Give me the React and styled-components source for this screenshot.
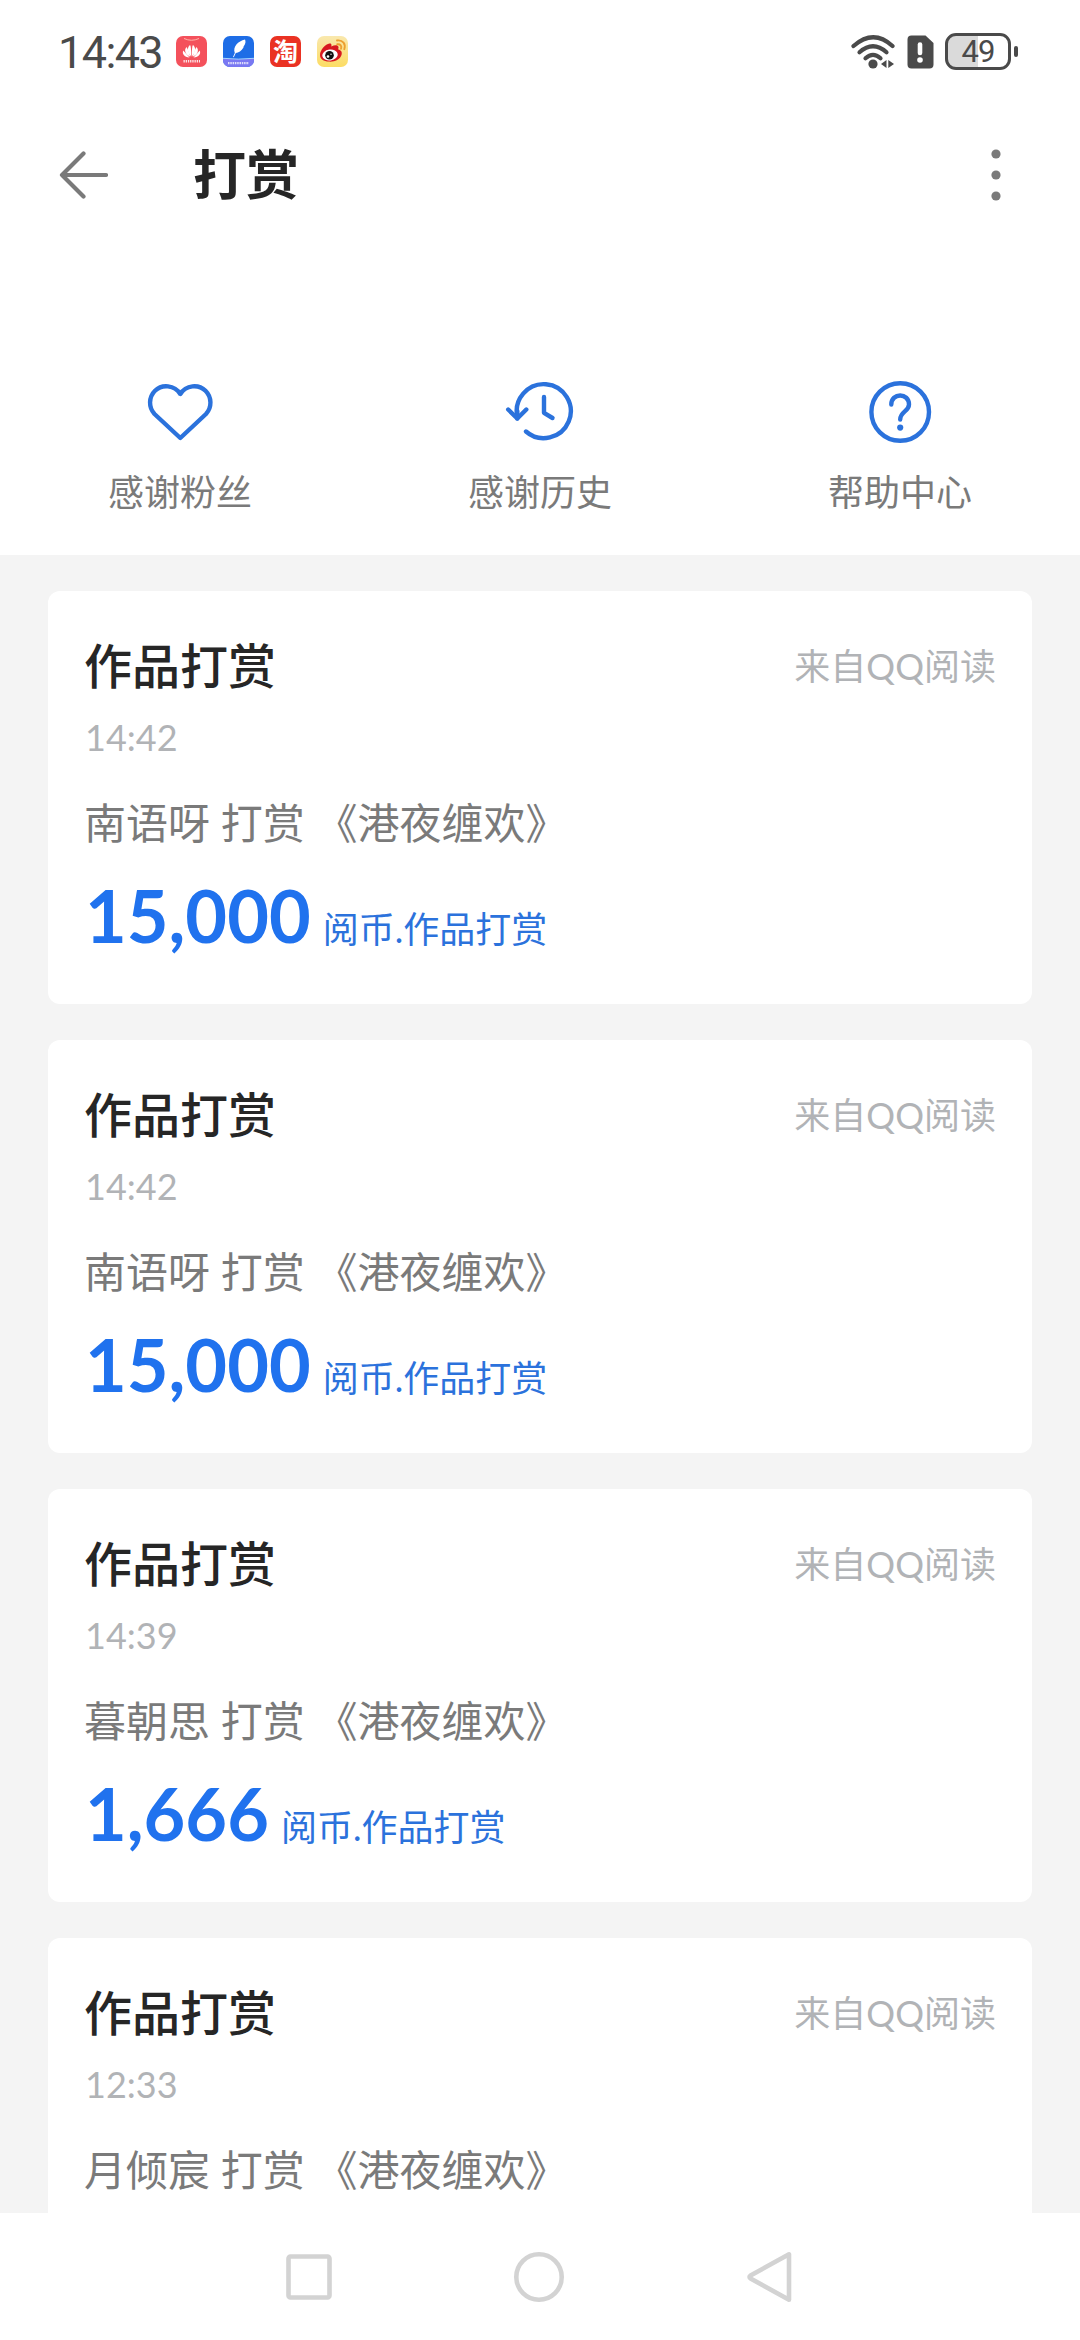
import React from "react";
import styled, { createGlobalStyle } from "styled-components";

const rewards = [
  { id: 1, time: "14:42", user: "南语呀", amount: "15,000" },
  { id: 2, time: "14:42", user: "南语呀", amount: "15,000" },
  { id: 3, time: "14:39", user: "暮朝思", amount: "1,666" },
  { id: 4, time: "12:33", user: "月倾宸" },
];

const HuaweiIcon = () => (
  <AppIcon viewBox="0 0 31 31">
    <rect width="31" height="31" rx="7" fill="#f4515c" />
    <path d="M8 2.5Q15.500 6 23 2.500" fill="none" stroke="#ffb3a8" strokeWidth="1" />
    <g fill="#fff">
      <path d="M15.200 20.500C11 16 11 11.500 14 9Q15.300 10 15.200 20.500Z" />
      <path d="M15.800 20.500C20 16 20 11.500 17 9Q15.700 10 15.800 20.500Z" />
      <path d="M14.300 20.800C9 18.500 7.800 14 10.500 11Q12.500 14 14.300 20.800Z" />
      <path d="M16.700 20.800C22 18.500 23.200 14 20.500 11Q18.500 14 16.700 20.800Z" />
      <path d="M13.500 21.400C8 21 6 18 7.200 14.500Z" />
      <path d="M17.500 21.400C23 21 25 18 23.800 14.500Z" />
    </g>
    <path d="M7.500 25.200H24" stroke="#fff" strokeWidth="2.600" strokeDasharray="1.300 .9" opacity=".85" />
  </AppIcon>
);

const FeatherIcon = () => (
  <AppIcon viewBox="0 0 31 31">
    <rect width="31" height="31" rx="7" fill="#1e6de6" />
    <path d="M0 22.500Q15 24 31 22.500V24A7 7 0 0 1 24 31H7A7 7 0 0 1 0 24Z" fill="#7a78f2" />
    <path d="M0 22.300Q15 24 31 22.300" fill="none" stroke="#a6d4ff" strokeWidth="1" />
    <path d="M11.800 17C9.500 11 15 5 22 3.500C23.800 8 20 10 20.500 11.500C18.500 15 15.500 16.500 12.800 17L10.800 21.300L10 21Z" fill="#fff" />
    <path d="M5 27.200H26" stroke="#fff" strokeWidth="2.200" strokeDasharray="1.500 .8" opacity=".75" />
  </AppIcon>
);

const WeiboIcon = () => (
  <AppIcon viewBox="0 0 31 31">
    <defs>
      <linearGradient id="weiboBg" x1="0" y1="0" x2="0" y2="1">
        <stop offset="0" stopColor="#f9e8ae" />
        <stop offset="1" stopColor="#fcdc63" />
      </linearGradient>
    </defs>
    <rect width="31" height="31" rx="7" fill="url(#weiboBg)" />
    <path
      d="M3 19C3 14 8.500 8 12.500 7.500C15 7.300 14.500 9.500 14.300 10.500C17.500 9 21 8.800 21.500 11C21.700 12.300 21 13 21.300 13.500C24 14 25.500 16 24.500 19C23 24 17 26 12 25.600C6.500 25.300 3 23 3 19Z"
      fill="#d71920"
    />
    <ellipse cx="13" cy="19" rx="7.800" ry="5.500" fill="#fff" transform="rotate(-8 13 19)" />
    <circle cx="12.500" cy="19.200" r="4.300" fill="#111" />
    <circle cx="11" cy="20.500" r="1.300" fill="#fff" />
    <circle cx="14" cy="18.300" r=".7" fill="#fff" />
    <path d="M20 4.500C26 3.800 29 8 27.300 13.200M20.300 8.300C23.500 8 25 10 24 12.800" fill="none" stroke="#ec9f31" strokeWidth="1.900" strokeLinecap="round" />
  </AppIcon>
);

const WifiIcon = () => (
  <svg width="46" height="36" viewBox="0 0 46 36">
    <g fill="none" stroke="#4a4a4a" strokeWidth="4.200" strokeLinecap="round">
      <path d="M3.500 12Q23.500 -5.500 42.500 12" />
      <path d="M9.500 18.300Q23 6.300 36.500 18.300" />
      <path d="M15.500 24.300Q23 17.500 30.500 24.300" />
    </g>
    <circle cx="23" cy="30" r="4.600" fill="#4a4a4a" />
    <path d="M31 30L36.500 26V34ZM38.300 26L44 30L38.300 34Z" fill="#4a4a4a" />
  </svg>
);

const SimIcon = () => (
  <svg width="27" height="34" viewBox="0 0 27 34">
    <path d="M4 0.500H18.500L26.500 8V29.500Q26.500 33.500 22.500 33.500H4.500Q.5 33.500 .5 29.500V4.500Q.5 .5 4.500 .5Z" fill="#4a4a4a" />
    <path d="M13 9.500V18" stroke="#fff" strokeWidth="4.600" strokeLinecap="round" />
    <circle cx="13" cy="25" r="2.800" fill="#fff" />
  </svg>
);

const BackIcon = () => (
  <svg width="50" height="50" viewBox="0 0 50 50" fill="none" stroke="#7a7a7a" strokeWidth="4.200" strokeLinecap="round" strokeLinejoin="round">
    <path d="M25.500 3.500L4 25L25.500 46.500M4 25H48" />
  </svg>
);

const MoreIcon = () => (
  <svg width="10" height="54" viewBox="0 0 10 54" fill="#7a7a7a">
    <circle cx="5" cy="6" r="4.600" />
    <circle cx="5" cy="27" r="4.600" />
    <circle cx="5" cy="48" r="4.600" />
  </svg>
);

const HeartIcon = () => (
  <ActionIcon viewBox="0 0 72 72">
    <path d="M36.300 18C30.500 8.800 18 7.800 11 14.800C4.500 21.300 4.500 31.500 10.500 38L36.300 62L62 38C68 31.500 68 21.300 61.500 14.800C54.500 7.800 42 8.800 36.300 18Z" />
  </ActionIcon>
);

const HistoryIcon = () => (
  <ActionIcon viewBox="0 0 72 72">
    <path d="M22 55.500A27 27 0 1 0 13.500 41.500" />
    <path d="M13.300 42.500V35" />
    <path d="M4.200 33.500L13.300 42.500L22.300 33.500" />
    <path d="M40 21V36.800L48.500 42" />
  </ActionIcon>
);

const HelpIcon = () => (
  <ActionIcon viewBox="0 0 72 72">
    <circle cx="36.200" cy="36" r="28.800" />
    <path d="M27.300 28.500C27.300 16.500 45 16.500 45 28.500C45 35.500 36.200 35.500 36.200 43.500" />
    <circle cx="36.200" cy="51.600" r="3.100" fill="#2b72dc" stroke="none" />
  </ActionIcon>
);

const actions = [
  { label: "感谢粉丝", icon: HeartIcon },
  { label: "感谢历史", icon: HistoryIcon },
  { label: "帮助中心", icon: HelpIcon },
];

const RewardCard = ({ reward }) => (
  <Card>
    <CardHead>
      <CardTitle>作品打赏</CardTitle>
      <Source>来自QQ阅读</Source>
    </CardHead>
    <Time>{reward.time}</Time>
    <Description>{reward.user} 打赏 《港夜缠欢》</Description>
    {reward.amount && (
      <AmountRow>
        <Amount>{reward.amount}</Amount>
        <Unit>阅币.作品打赏</Unit>
      </AmountRow>
    )}
  </Card>
);

const App = () => {
  return (
    <Screen>
      <GlobalStyle />
      <StatusBar>
        <Clock>14:43</Clock>
        <AppIcons>
          <HuaweiIcon />
          <FeatherIcon />
          <TaobaoIcon>淘</TaobaoIcon>
          <WeiboIcon />
        </AppIcons>
        <SystemIcons>
          <WifiIcon />
          <SimIcon />
          <BatteryWrap>
            <Battery>49</Battery>
            <BatteryTip />
          </BatteryWrap>
        </SystemIcons>
      </StatusBar>

      <Header>
        <BackIcon />
        <PageTitle>打赏</PageTitle>
        <MoreIcon />
      </Header>

      <Actions>
        {actions.map(({ label, icon: Icon }) => (
          <Action key={label}>
            <Icon />
            <ActionLabel>{label}</ActionLabel>
          </Action>
        ))}
      </Actions>

      <List>
        {rewards.map((reward) => (
          <RewardCard key={reward.id} reward={reward} />
        ))}
      </List>

      <NavBar>
        <svg width="50" height="54" viewBox="0 0 50 54">
          <rect x="4.500" y="6.500" width="41" height="41" rx="2" />
        </svg>
        <svg width="54" height="54" viewBox="0 0 54 54">
          <circle cx="27" cy="27" r="22.700" />
        </svg>
        <svg width="50" height="54" viewBox="0 0 50 54">
          <path d="M45 4.300V49.700L6.500 28.500Q4.500 27 6.500 25.500Z" />
        </svg>
      </NavBar>
    </Screen>
  );
};

export default App;

const GlobalStyle = createGlobalStyle`
  * {
    box-sizing: border-box;
  }

  body {
    margin: 0;
    background: #fff;
    font-family: Lato, "Noto Sans CJK SC", sans-serif;
  }

  svg {
    display: block;
    flex: none;
  }
`;

const Screen = styled.div`
  display: flex;
  flex-direction: column;
  width: 1080px;
  height: 2340px;
  overflow: hidden;
  background: #fff;
`;

const StatusBar = styled.div`
  display: flex;
  align-items: center;
  height: 103px;
  padding: 0 62px 0 58px;
`;

const Clock = styled.div`
  width: 118px;
  padding-top: 2px;
  color: #4a4a4a;
  font-family: Roboto, sans-serif;
  font-size: 45px;
  letter-spacing: -1.6px;
  line-height: 60px;
  white-space: nowrap;
`;

const AppIcons = styled.div`
  display: flex;
  gap: 16px;
`;

const AppIcon = styled.svg`
  width: 31px;
  height: 31px;
`;

const TaobaoIcon = styled.div`
  width: 31px;
  height: 31px;
  border-radius: 7px;
  background: #ea3223;
  color: #fff;
  font-size: 25px;
  font-weight: 700;
  line-height: 30px;
  text-align: center;
`;

const SystemIcons = styled.div`
  display: flex;
  align-items: center;
  gap: 11px;
  margin-left: auto;
`;

const BatteryWrap = styled.div`
  display: flex;
  align-items: center;
  gap: 3px;
`;

const Battery = styled.div`
  width: 66px;
  height: 37px;
  border: 3px solid #4a4a4a;
  border-radius: 11px;
  background: linear-gradient(90deg, #dadada 50%, #fff 50%);
  color: #4a4a4a;
  font-family: Roboto, sans-serif;
  font-size: 31px;
  letter-spacing: -1px;
  line-height: 32px;
  text-align: center;
`;

const BatteryTip = styled.div`
  width: 4px;
  height: 11px;
  border-radius: 2px;
  background: #4a4a4a;
`;

const Header = styled.div`
  display: flex;
  align-items: center;
  height: 143px;
  padding: 0 79px 0 58px;
`;

const PageTitle = styled.h1`
  flex: 1;
  margin: 0 0 0 85px;
  color: #262626;
  font-size: 53px;
  font-weight: 700;
  line-height: 80px;
`;

const Actions = styled.div`
  display: grid;
  grid-template-columns: repeat(3, 1fr);
  height: 309px;
  padding-top: 130px;
`;

const Action = styled.div`
  display: flex;
  flex-direction: column;
  align-items: center;
`;

const ActionIcon = styled.svg`
  width: 72px;
  height: 72px;
  fill: none;
  stroke: #2b72dc;
  stroke-width: 4.4;
  stroke-linecap: round;
  stroke-linejoin: round;
`;

const ActionLabel = styled.div`
  margin-top: 17px;
  color: #7a7a7a;
  font-size: 36px;
  line-height: 54px;
`;

const List = styled.div`
  display: flex;
  flex-direction: column;
  gap: 36px;
  height: 1658px;
  padding: 36px 48px 0;
  overflow: hidden;
  background: #f4f4f4;
`;

const Card = styled.div`
  flex: none;
  height: 413px;
  padding: 39px 36px 0;
  border-radius: 12px;
  background: #fff;
`;

const CardHead = styled.div`
  display: flex;
  align-items: center;
  justify-content: space-between;
  height: 72px;
`;

const CardTitle = styled.div`
  color: #262626;
  font-size: 48px;
  font-weight: 500;
  line-height: 72px;
`;

const Source = styled.div`
  color: #b1b3b6;
  font-size: 36px;
  line-height: 54px;
`;

const Time = styled.div`
  margin-top: 8px;
  padding-left: 1px;
  color: #b1b3b6;
  font-size: 36px;
  line-height: 54px;
`;

const Description = styled.div`
  margin-top: 28px;
  color: #7a7a7a;
  font-size: 42px;
  line-height: 62px;
  white-space: pre;
`;

const AmountRow = styled.div`
  display: flex;
  align-items: baseline;
  gap: 12px;
  margin-top: -1px;
  padding-left: 1px;
`;

const Amount = styled.span`
  color: #2072ee;
  font-size: 72px;
  font-weight: 700;
  line-height: 124px;
`;

const Unit = styled.span`
  color: #2b72dc;
  font-size: 36px;
  line-height: 54px;
`;

const NavBar = styled.div`
  display: flex;
  align-items: center;
  justify-content: space-between;
  height: 127px;
  padding: 0 286px 0 284px;

  svg {
    fill: none;
    stroke: #d3d3d3;
    stroke-width: 4.6;
    stroke-linejoin: round;
  }
`;
